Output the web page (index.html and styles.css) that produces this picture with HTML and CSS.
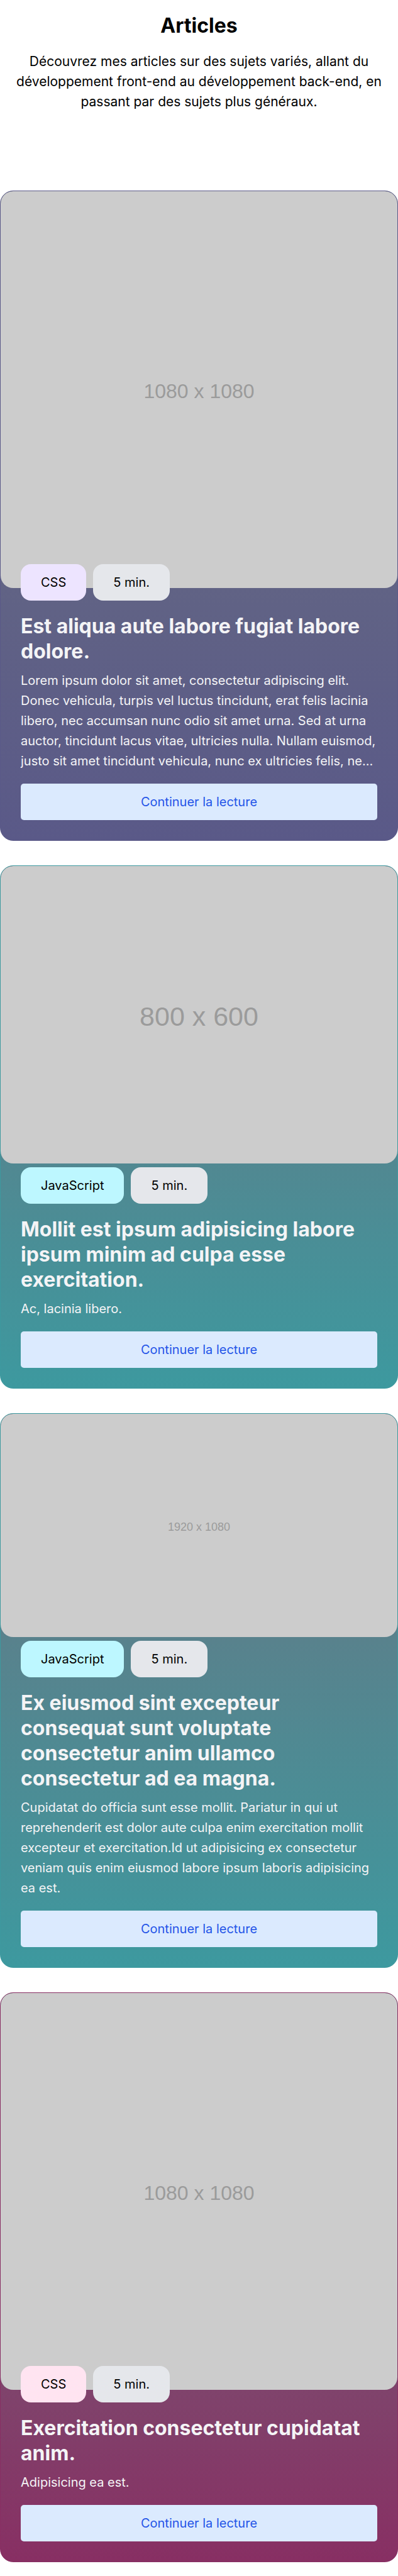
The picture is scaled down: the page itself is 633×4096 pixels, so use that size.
FILE: index.html
```html
<!DOCTYPE html>
<html lang="fr">
<head>
<meta charset="utf-8">
<meta name="viewport" content="width=device-width, initial-scale=1">
<title>Articles</title>
<link rel="stylesheet" href="styles.css">
</head>
<body>
<header class="intro">
  <h1 class="intro-title">Articles</h1>
  <p class="intro-text">Découvrez mes articles sur des sujets variés, allant du développement front-end au développement back-end, en passant par des sujets plus généraux.</p>
</header>
<main class="articles">
  <article class="card card-violet">
    <div class="cover cover-square">1080 x 1080</div>
    <div class="content content-overlap">
      <ul class="tags"><li class="tag tag-topic">CSS</li><li class="tag">5 min.</li></ul>
      <h2 class="card-title">Est aliqua aute labore fugiat labore dolore.</h2>
      <p class="excerpt">Lorem ipsum dolor sit amet, consectetur adipiscing elit. Donec vehicula, turpis vel luctus tincidunt, erat felis lacinia libero, nec accumsan nunc odio sit amet urna. Sed at urna auctor, tincidunt lacus vitae, ultricies nulla. Nullam euismod, justo sit amet tincidunt vehicula, nunc ex ultricies felis, ne...</p>
      <a class="more" href="#">Continuer la lecture</a>
    </div>
  </article>
  <article class="card card-teal">
    <div class="cover cover-classic">800 x 600</div>
    <div class="content">
      <ul class="tags"><li class="tag tag-topic">JavaScript</li><li class="tag">5 min.</li></ul>
      <h2 class="card-title">Mollit est ipsum adipisicing labore ipsum minim ad culpa esse exercitation.</h2>
      <p class="excerpt">Ac, lacinia libero.</p>
      <a class="more" href="#">Continuer la lecture</a>
    </div>
  </article>
  <article class="card card-teal">
    <div class="cover cover-wide">1920 x 1080</div>
    <div class="content">
      <ul class="tags"><li class="tag tag-topic">JavaScript</li><li class="tag">5 min.</li></ul>
      <h2 class="card-title">Ex eiusmod sint excepteur consequat sunt voluptate consectetur anim ullamco consectetur ad ea magna.</h2>
      <p class="excerpt">Cupidatat do officia sunt esse mollit. Pariatur in qui ut reprehenderit est dolor aute culpa enim exercitation mollit excepteur et exercitation.Id ut adipisicing ex consectetur veniam quis enim eiusmod labore ipsum laboris adipisicing ea est.</p>
      <a class="more" href="#">Continuer la lecture</a>
    </div>
  </article>
  <article class="card card-pink">
    <div class="cover cover-square">1080 x 1080</div>
    <div class="content content-overlap">
      <ul class="tags"><li class="tag tag-topic">CSS</li><li class="tag">5 min.</li></ul>
      <h2 class="card-title">Exercitation consectetur cupidatat anim.</h2>
      <p class="excerpt">Adipisicing ea est.</p>
      <a class="more" href="#">Continuer la lecture</a>
    </div>
  </article>
</main>
</body>
</html>
```
FILE: styles.css
```css
*,
*::before,
*::after {
  box-sizing: border-box;
}

body,
h1,
h2,
p,
ul {
  margin: 0;
  padding: 0;
}

body {
  background: #fff;
  color: #000;
  font-family: Inter, sans-serif;
  font-size: 20px;
  line-height: 32px;
}

.intro {
  display: flex;
  flex-direction: column;
  gap: 21px;
  padding: 21px 21px 125px;
  text-align: center;
}

.intro-title {
  font-size: 32px;
  line-height: 40px;
  font-weight: 700;
}

.intro-text {
  font-size: 21px;
}

.articles {
  display: flex;
  flex-direction: column;
  gap: 39px;
  padding-bottom: 21px;
}

.card {
  --accent: #5a5988;
  --topic: #ede4ff;
  border: 1px solid var(--accent);
  border-radius: 21px;
  background: linear-gradient(#6b7280, var(--accent));
  color: #f4f4f6;
  overflow: hidden;
}

.card-teal {
  --accent: #3d999f;
  --topic: #bdf7ff;
}

.card-pink {
  --accent: #882f63;
  --topic: #ffe4f1;
}

.cover {
  display: flex;
  align-items: center;
  justify-content: center;
  padding-top: 5px;
  border-radius: 20px;
  background: #ccc;
  color: #9b9b9b;
  font-family: "Liberation Sans", Arial, sans-serif;
}

.cover-square {
  aspect-ratio: 1;
  font-size: 32px;
}

.cover-classic {
  aspect-ratio: 4 / 3;
  font-size: 43px;
}

.cover-wide {
  aspect-ratio: 16 / 9;
  font-size: 18px;
}

.content {
  display: flex;
  flex-direction: column;
  padding: 6px 32px 32px;
}

.content-overlap {
  position: relative;
  margin-top: -38px;
  padding-top: 0;
}

.tags {
  display: flex;
  gap: 11px;
  margin-bottom: 21px;
  list-style: none;
}

.tag {
  padding: 13px 32px;
  border-radius: 16px;
  background: #e5e7eb;
  color: #000;
}

.tag-topic {
  background: var(--topic);
}

.card-title {
  margin-bottom: 10px;
  font-size: 32px;
  line-height: 40px;
  font-weight: 700;
}

.excerpt {
  margin-bottom: 20px;
}

.more {
  padding: 13px;
  border-radius: 5px;
  background: #dbeafe;
  color: #2555e8;
  text-align: center;
  text-decoration: none;
}
```
